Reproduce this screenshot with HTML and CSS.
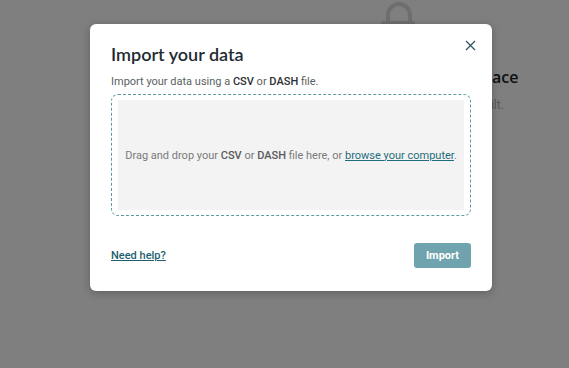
FILE: index.html
```html
<!DOCTYPE html>
<html lang="en">
<head>
    <meta charset="UTF-8">
    <meta name="viewport" content="width=device-width, initial-scale=1.0">
    <title>Marketplace - Import</title>
    <link rel="stylesheet" href="styles.css">
</head>
<body>

    <!-- strona pod spodem -->
    <div class="page">
        <div class="empty-state">
            <svg class="lock" width="34" height="40" viewBox="0 0 34 40">
                <path d="M7 20 V13 A11 11 0 0 1 29 13 V20" fill="none" stroke="#dcdcdc" stroke-width="4"/>
                <rect x="0" y="19" width="34" height="21" rx="2" fill="#dcdcdc"/>
            </svg>
            <h2>Your marketplace</h2>
            <p>Nothing has been built.</p>
        </div>
    </div>

    <div class="overlay">
        <div class="modal">
            <button class="close" aria-label="Close">
                <svg width="11" height="11" viewBox="0 0 11 11">
                    <path d="M1 1 L10 10 M10 1 L1 10" stroke="#2f5663" stroke-width="1.3" fill="none"/>
                </svg>
            </button>

            <h1>Import your data</h1>
            <p class="subtitle">Import your data using a <b>CSV</b> or <b>DASH</b> file.</p>

            <div class="dropzone">
                <div class="dropzone-inner">
                    <span>Drag and drop your <b>CSV</b> or <b>DASH</b> file here, or <a href="#">browse your computer</a>.</span>
                </div>
            </div>

            <div class="modal-footer">
                <a href="#" class="help">Need help?</a>
                <button class="import-btn">Import</button>
            </div>
        </div>
    </div>

</body>
</html>
```

FILE: styles.css
```css
body {
    margin: 0;
    padding: 0;
    font-family: 'Roboto', 'Liberation Sans', sans-serif;
    background: #ffffff;
    width: 569px;
    height: 368px;
    overflow: hidden;
    position: relative;
}

.page {
    padding-left: 381px;
    height: 368px;
}

.empty-state {
    display: flex;
    flex-direction: column;
    align-items: flex-start;
    padding-top: 2px;
}

.empty-state h2 {
    font-family: 'Open Sans', sans-serif;
    font-size: 16px;
    font-weight: 600;
    color: #222;
    margin: 24px 0 0 0;
    white-space: nowrap;
}

.empty-state p {
    font-size: 12px;
    color: #b0b0b0;
    margin: 10px 0 0 0;
    white-space: nowrap;
}

.overlay {
    position: absolute;
    top: 0;
    left: 0;
    right: 0;
    bottom: 0;
    background: rgba(0, 0, 0, 0.5);
}

.modal {
    position: relative;
    margin: 24px 0 0 90px;
    width: 402px;
    box-sizing: border-box;
    padding: 18px 21px 23px 21px;
    background: #fff;
    border-radius: 6px;
    box-shadow: 0 2px 8px rgba(0, 0, 0, 0.25);
}

.close {
    position: absolute;
    top: 16px;
    right: 16px;
    width: 11px;
    height: 11px;
    padding: 0;
    border: none;
    background: none;
    display: flex;
}

.modal h1 {
    font-family: 'Lato', sans-serif;
    font-size: 18px;
    font-weight: 600;
    line-height: 24px;
    color: #1f2b34;
    margin: 0;
}

.subtitle {
    font-size: 11px;
    line-height: 16px;
    color: #5a5f63;
    margin: 8px 0 4px 0;
}

.subtitle b {
    font-weight: 500;
    color: #2a2f33;
}

.dropzone {
    border: 1px dashed #5b9aa5;
    border-radius: 7px;
    padding: 5px 6px;
}

.dropzone-inner {
    background: #f3f3f3;
    height: 110px;
    display: flex;
    align-items: center;
    justify-content: center;
    font-size: 11px;
    color: #7a7a7a;
    white-space: nowrap;
}

.dropzone-inner b {
    font-weight: 500;
    color: #5a5a5a;
}

.dropzone-inner a {
    color: #1f6d7c;
}

.modal-footer {
    display: flex;
    justify-content: space-between;
    align-items: center;
    margin-top: 27px;
}

.help {
    font-size: 11px;
    font-weight: 500;
    color: #1d5f6e;
}

.import-btn {
    font-family: 'Roboto', sans-serif;
    font-size: 11px;
    font-weight: 700;
    color: #fff;
    background: #6fa3ae;
    border: none;
    border-radius: 3px;
    width: 57px;
    height: 25px;
    padding: 0;
}
```
